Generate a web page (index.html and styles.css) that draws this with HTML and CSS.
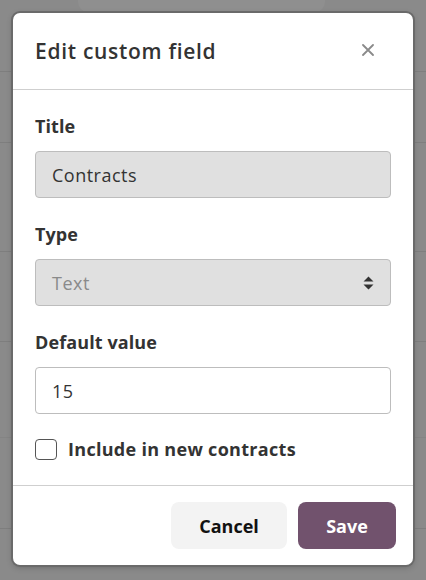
FILE: index.html
```html
<!DOCTYPE html>
<html lang="en">
<head>
  <meta charset="UTF-8" />
  <meta name="viewport" content="width=device-width, initial-scale=1.0" />
  <title>Edit custom field</title>
  <link rel="stylesheet" href="styles.css">
</head>
<body>
  <div class="page">
    <div class="page-tab"></div>
    <div class="row r1"></div>
    <div class="row r2"></div>
    <div class="row r3"></div>
    <div class="row r4"></div>
    <div class="row r5"></div>
    <div class="row r6"></div>
  </div>

  <div class="backdrop">
    <div class="modal">
      <div class="modal-header">
        <h2>Edit custom field</h2>
        <button class="close" aria-label="Close">
          <svg width="12" height="12" viewBox="0 0 12 12"><path d="M1 1L11 11M11 1L1 11" stroke="#8a8a8a" stroke-width="1.8" stroke-linecap="round"/></svg>
        </button>
      </div>

      <div class="modal-body">
        <div class="field">
          <label>Title</label>
          <div class="input disabled">Contracts</div>
        </div>
        <div class="field">
          <label>Type</label>
          <div class="input disabled select">
            <span class="placeholder">Text</span>
            <svg width="11" height="14" viewBox="0 0 11 14"><path d="M5.5 0.5L10.5 5.5H0.5Z M5.5 13.5L10.5 8.5H0.5Z" fill="#333"/></svg>
          </div>
        </div>
        <div class="field">
          <label>Default value</label>
          <div class="input">15</div>
        </div>
        <div class="check">
          <span class="box"></span>
          <span>Include in new contracts</span>
        </div>
      </div>

      <div class="modal-footer">
        <button class="btn btn-light">Cancel</button>
        <button class="btn btn-primary">Save</button>
      </div>
    </div>
  </div>
</body>
</html>
```

FILE: styles.css
```css
:root {
  --overlay: #8a8a8a;
  --line: #7e7e7e;
  --text: #333333;
  --muted: #8a8a8a;
  --border: #bdbdbd;
  --disabled: #e0e0e0;
  --primary: #71526d;
}
* { box-sizing: border-box; margin: 0; padding: 0; }
body {
  background: var(--overlay);
  font-family: 'Open Sans', 'Noto Sans', sans-serif;
  color: var(--text);
  height: 580px;
  overflow: hidden;
}
.page { position: relative; }
.page-tab {
  position: absolute; left: 78px; top: -10px;
  width: 247px; height: 22px;
  background: #8f8f8f; border-radius: 10px;
}
.row { border-bottom: 1px solid var(--line); }
.r1 { height: 72px; }
.r2 { height: 71px; }
.r3 { height: 109px; }
.r4 { height: 90px; }
.r5 { height: 96px; border-bottom-color: #848484; }
.r6 { height: 91px; }

.backdrop {
  position: absolute; inset: 0;
  display: flex; justify-content: center;
  padding-top: 13px;
}
.modal {
  width: 400px; height: 552px;
  background: #fff;
  border-radius: 7px;
  box-shadow: 0 0 0 2px #6a6a6a, 0 2px 6px rgba(0,0,0,0.25);
  display: flex; flex-direction: column;
}
.modal-header {
  height: 77px;
  display: flex; align-items: center; justify-content: space-between;
  padding: 0 39px 0 22px;
  border-bottom: 1px solid #cfcfcf;
}
.modal-header h2 {
  font-size: 21px; font-weight: 600;
  letter-spacing: 0.7px;
}
.close {
  background: none; border: none;
  width: 12px; height: 12px; display: flex;
  margin-top: -2px;
}
.modal-body {
  flex: 1;
  padding: 25px 22px 0;
}
.field { margin-bottom: 25px; }
.field label {
  display: block;
  font-size: 18px; font-weight: 700;
  line-height: 22px;
  letter-spacing: 0.1px;
  margin-bottom: 14px;
}
.input {
  height: 47px;
  border: 1px solid var(--border);
  border-radius: 4px;
  padding: 0 16px;
  display: flex; align-items: center;
  font-size: 18px;
  letter-spacing: 0.5px;
  background: #fff;
}
.input.disabled { background: var(--disabled); }
.select { justify-content: space-between; padding-right: 16px; }
.placeholder { color: var(--muted); }
.check {
  display: flex; align-items: center; gap: 11px;
  font-size: 18px; font-weight: 700;
  letter-spacing: 0.3px;
  margin-top: -2px;
}
.box {
  width: 22px; height: 21px;
  border: 1px solid #555;
  border-radius: 4px;
}
.modal-footer {
  height: 80px;
  border-top: 1px solid #cfcfcf;
  display: flex; align-items: center; justify-content: flex-end;
  gap: 11px;
  padding: 0 17px 0 0;
}
.btn {
  height: 47px;
  border: none; border-radius: 8px;
  font-family: inherit;
  font-size: 18px; font-weight: 700;
  cursor: pointer;
}
.btn-light { width: 116px; background: #f3f3f3; color: #111; }
.btn-primary { width: 98px; background: var(--primary); color: #fff; }
```
